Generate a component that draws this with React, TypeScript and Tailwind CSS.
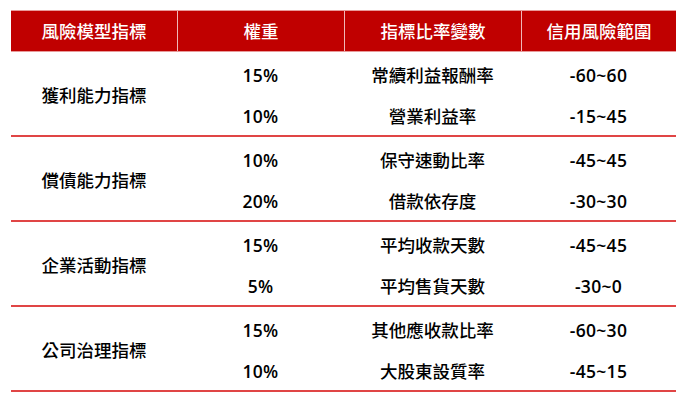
const groups = [
  {
    name: "獲利能力指標",
    rows: [
      ["15%", "常續利益報酬率", "-60~60"],
      ["10%", "營業利益率", "-15~45"],
    ],
  },
  {
    name: "償債能力指標",
    rows: [
      ["10%", "保守速動比率", "-45~45"],
      ["20%", "借款依存度", "-30~30"],
    ],
  },
  {
    name: "企業活動指標",
    rows: [
      ["15%", "平均收款天數", "-45~45"],
      ["5%", "平均售貨天數", "-30~0"],
    ],
  },
  {
    name: "公司治理指標",
    rows: [
      ["15%", "其他應收款比率", "-60~30"],
      ["10%", "大股東設質率", "-45~15"],
    ],
  },
];

const cols = "grid grid-cols-[166px_167px_177px_155px]";

export default function App() {
  return (
    <div
      className="h-[408px] w-[695px] bg-white pl-[11px] pt-[10px] text-[17.5px] text-black"
      style={{ fontFamily: '"Open Sans", "Noto Sans CJK TC", sans-serif' }}
    >
      <div className="w-[665px]">
        {/* header */}
        <div className={`${cols} h-[42px] border-y border-[#e89a9a] bg-[#c00000] font-medium text-white`}>
          {["風險模型指標", "權重", "指標比率變數", "信用風險範圍"].map((h, i) => (
            <div
              key={h}
              className={`flex items-center justify-center ${i > 0 ? "border-l border-[#f0b8b8]" : ""}`}
            >
              {h}
            </div>
          ))}
        </div>

        {groups.map((g) => (
          <div key={g.name} className={`${cols} h-[85px] border-b-2 border-b-[#e04545] font-medium`}>
            <div className="flex items-center justify-center pt-[1px]">{g.name}</div>
            {[0, 1, 2].map((c) => (
              <div key={c} className={`flex flex-col pt-[3px] ${c !== 1 ? "font-semibold tracking-[0.3px]" : ""}`}>
                {g.rows.map((r) => (
                  <div key={r[c]} className="flex h-[41px] items-center justify-center">
                    {r[c]}
                  </div>
                ))}
              </div>
            ))}
          </div>
        ))}
      </div>
    </div>
  );
}
